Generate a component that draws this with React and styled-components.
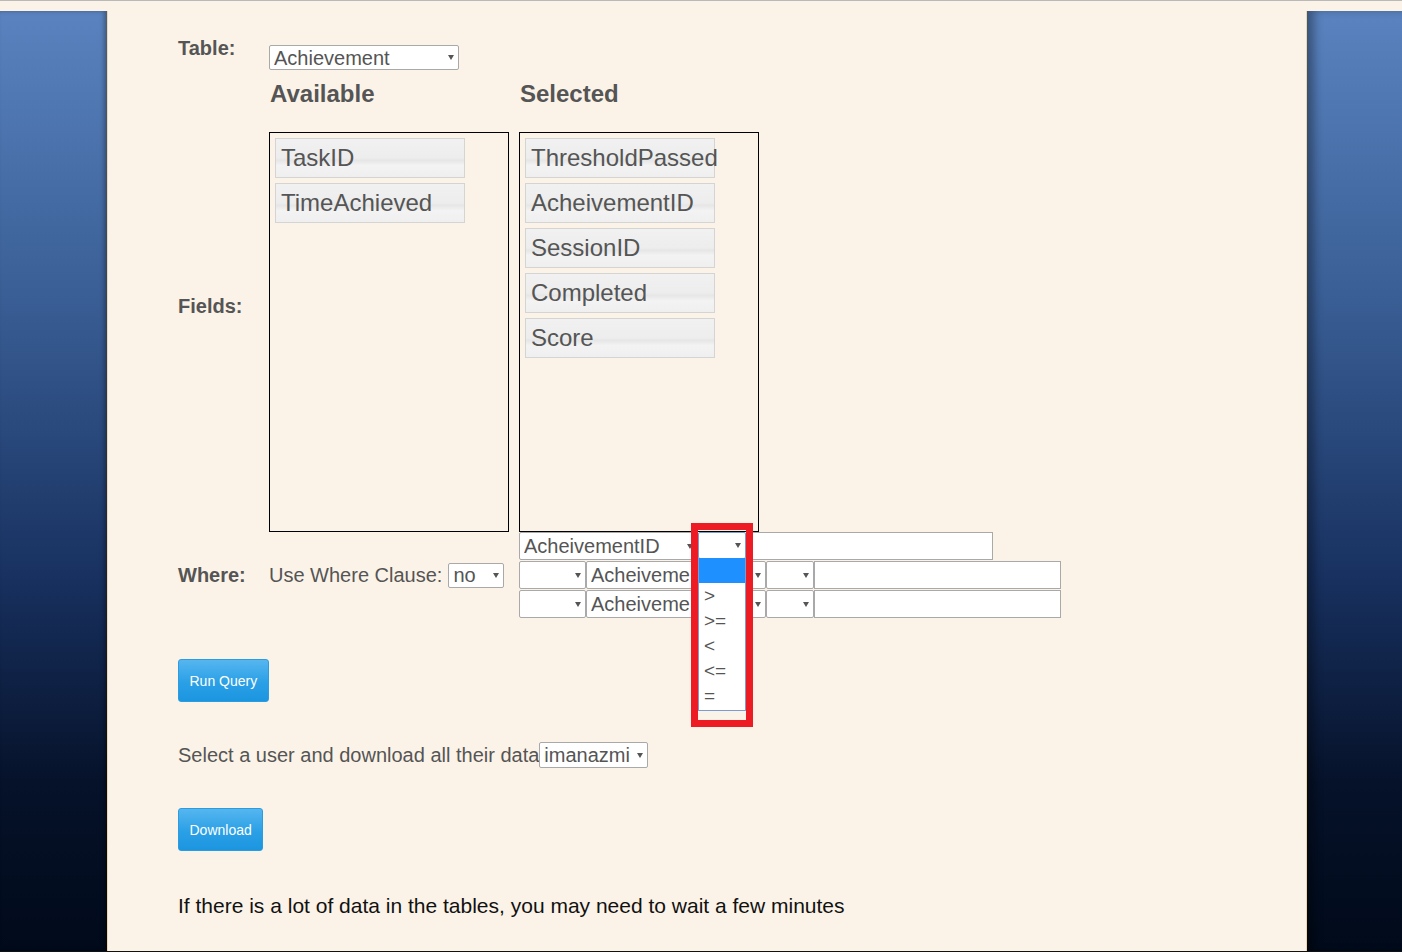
import React from "react";
import styled, { createGlobalStyle } from "styled-components";

const GlobalStyle = createGlobalStyle`
  html, body {
    margin: 0;
    padding: 0;
    background: #fcf3e8;
    font-family: "Liberation Sans", Arial, sans-serif;
    color: #555;
    text-align: left;
  }
`;

const Page = styled.div`
  display: flex;
  flex-direction: column;
  height: 952px;
  overflow: hidden;
  border-top: 1px solid #b9b9b9;
  border-bottom: 1px solid #111;
  box-sizing: border-box;
`;

const TopStrip = styled.div`
  height: 10px;
  background: #fcf3e8;
`;

const Body = styled.div`
  display: flex;
  flex: 1;
`;

const SidePanel = styled.div`
  flex: ${(p) => (p.$side === "left" ? "0 0 107px" : "1")};
  background: linear-gradient(to bottom, #5a83bf 0%, #3a5f96 30%, #183160 60%, #06122a 82%, #000a1a 100%);
  box-shadow: ${(p) =>
    p.$side === "left"
      ? "inset -3px 0 4px rgba(0,0,0,0.3)"
      : "inset 9px 0 10px -2px rgba(0,0,0,0.35)"};
`;

const Container = styled.div`
  flex: 0 0 1200px;
  box-sizing: border-box;
  background: #fcf3e8;
  border-left: 1px solid #f1d6a6;
  border-right: 1px solid #f1d6a6;
  padding: 26px 0 0 70px;
`;

const FormRow = styled.div`
  display: flex;
  align-items: ${(p) => p.$align || "flex-start"};
  margin-top: ${(p) => p.$top || 0}px;
`;

const Label = styled.div`
  flex: 0 0 91px;
  font-size: 20px;
  font-weight: bold;
  line-height: 23px;
  color: #555;
`;

const FieldsArea = styled.div`
  display: flex;
  flex-direction: column;
  gap: 24px;
`;

const Pair = styled.div`
  display: flex;
`;

const Column = styled.div`
  flex: 0 0 250px;
  display: flex;
  flex-direction: column;
  align-items: flex-start;
`;

const Heading = styled.div`
  font-size: 24px;
  font-weight: bold;
  line-height: 28px;
  color: #555;
  padding-left: 1px;
`;

const SelectBox = styled.div`
  box-sizing: border-box;
  display: flex;
  align-items: center;
  justify-content: space-between;
  width: ${(p) => p.$w}px;
  height: ${(p) => p.$h || 25}px;
  margin-top: ${(p) => p.$top || 0}px;
  padding: 0 4px;
  background: #fff;
  border: 1px solid ${(p) => (p.$open ? "#7a9cd3" : "#a9a9a9")};
  border-radius: 2px;
  font-size: 20px;
  color: #555;
  flex-shrink: 0;
`;

const SelectText = styled.span`
  white-space: nowrap;
  overflow: hidden;
  flex: 1;
  line-height: 1;
`;

const Arrow = styled.span`
  flex: 0 0 auto;
  width: 0;
  height: 0;
  margin-left: 3px;
  border-left: 3.5px solid transparent;
  border-right: 3.5px solid transparent;
  border-top: 5px solid #555;
`;

const FieldBox = styled.div`
  box-sizing: border-box;
  width: 240px;
  height: 400px;
  border: 1px solid #000;
  padding: 5px;
  display: flex;
  flex-direction: column;
  gap: 5px;
  margin-right: 10px;
`;

const FieldButton = styled.div`
  box-sizing: border-box;
  width: 190px;
  height: 40px;
  border: 1px solid #d4d4d4;
  background: linear-gradient(to bottom, #f1f1f1 0%, #ededed 50%, #e6e6e6 56%, #f3f3f3 70%, #efefef 100%);
  font-size: 24px;
  line-height: 38px;
  padding-left: 5px;
  color: #555;
  white-space: nowrap;
`;

const InlineText = styled.span`
  font-size: ${(p) => p.$size || 20}px;
  color: ${(p) => p.$color || "#555"};
  white-space: nowrap;
`;

const ClauseLine = styled.div`
  display: flex;
  align-items: center;
  gap: 6px;
`;

const WhereStack = styled.div`
  display: flex;
  flex-direction: column;
  gap: 1px;
`;

const WhereRow = styled.div`
  display: flex;
  align-items: stretch;
  height: 28px;
`;

const TextInput = styled.div`
  box-sizing: border-box;
  width: ${(p) => p.$w}px;
  height: 28px;
  background: #fff;
  border: 1px solid #a9a9a9;
`;

const OpenWrap = styled.div`
  position: relative;
  width: 48px;
  flex-shrink: 0;
  z-index: 2;
`;

const OptionList = styled.div`
  position: absolute;
  top: 26px;
  left: 0;
  width: 48px;
  height: 153px;
  box-sizing: border-box;
  background: #fff;
  border: 1px solid #7a9cd3;
  border-top: none;
`;

const Option = styled.div`
  height: 25px;
  line-height: 25px;
  padding-left: 5px;
  font-size: 19px;
  color: ${(p) => (p.$active ? "#fff" : "#555")};
  background: ${(p) => (p.$active ? "#1e90ff" : "transparent")};
`;

const Highlight = styled.div`
  position: absolute;
  left: -7px;
  top: -9px;
  width: 62px;
  height: 204px;
  box-sizing: border-box;
  border: 7px solid #ed1c24;
  pointer-events: none;
`;

const BlueButton = styled.button`
  display: block;
  height: 43px;
  padding: 0 10.5px;
  margin-top: ${(p) => p.$top}px;
  border: 1px solid #2a9ce2;
  border-radius: 3px;
  background: linear-gradient(to bottom, #56b6ef 0%, #2aa0e6 55%, #1c95e0 100%);
  color: #fff;
  font-family: "Liberation Sans", Arial, sans-serif;
  font-size: 14px;
`;

const TextLine = styled.div`
  display: flex;
  align-items: center;
  margin-top: ${(p) => p.$top}px;
`;

const Select = ({ w, h, top, open, children }) => (
  <SelectBox $w={w} $h={h} $top={top} $open={open}>
    <SelectText>{children}</SelectText>
    <Arrow />
  </SelectBox>
);

const available = ["TaskID", "TimeAchieved"];
const selected = ["ThresholdPassed", "AcheivementID", "SessionID", "Completed", "Score"];
const operators = ["", ">", ">=", "<", "<=", "="];

export default function App() {
  return (
    <>
      <GlobalStyle />
      <Page>
        <TopStrip />
        <Body>
          <SidePanel $side="left" />
          <Container>
            <FormRow>
              <Label>Table:</Label>
              <Select w={190} top={8}>Achievement</Select>
            </FormRow>

            <FormRow $top={10} $align="center">
              <Label>Fields:</Label>
              <FieldsArea>
                <Pair>
                  <Column><Heading>Available</Heading></Column>
                  <Column><Heading>Selected</Heading></Column>
                </Pair>
                <Pair>
                  <FieldBox>
                    {available.map((f) => (
                      <FieldButton key={f}>{f}</FieldButton>
                    ))}
                  </FieldBox>
                  <FieldBox>
                    {selected.map((f) => (
                      <FieldButton key={f}>{f}</FieldButton>
                    ))}
                  </FieldBox>
                </Pair>
              </FieldsArea>
            </FormRow>

            <FormRow $align="center">
              <Label>Where:</Label>
              <Column>
                <ClauseLine>
                  <InlineText>Use Where Clause:</InlineText>
                  <Select w={56}>no</Select>
                </ClauseLine>
              </Column>
              <WhereStack>
                <WhereRow>
                  <Select w={179} h={28}>AcheivementID</Select>
                  <OpenWrap>
                    <Select w={48} h={27} open />
                    <OptionList>
                      {operators.map((o, i) => (
                        <Option key={i} $active={i === 0}>{o}</Option>
                      ))}
                    </OptionList>
                    <Highlight />
                  </OpenWrap>
                  <TextInput $w={247} />
                </WhereRow>
                {[0, 1].map((r) => (
                  <WhereRow key={r}>
                    <Select w={67} h={28} />
                    <Select w={180} h={28}>AcheivementID</Select>
                    <Select w={48} h={28} />
                    <TextInput $w={247} />
                  </WhereRow>
                ))}
              </WhereStack>
            </FormRow>

            <BlueButton $top={41}>Run Query</BlueButton>

            <TextLine $top={40}>
              <InlineText>Select a user and download all their data</InlineText>
              <Select w={109} h={26}>imanazmi</Select>
            </TextLine>

            <BlueButton $top={40}>Download</BlueButton>

            <TextLine $top={43}>
              <InlineText $size={21} $color="#111">
                If there is a lot of data in the tables, you may need to wait a few minutes
              </InlineText>
            </TextLine>
          </Container>
          <SidePanel $side="right" />
        </Body>
      </Page>
    </>
  );
}
